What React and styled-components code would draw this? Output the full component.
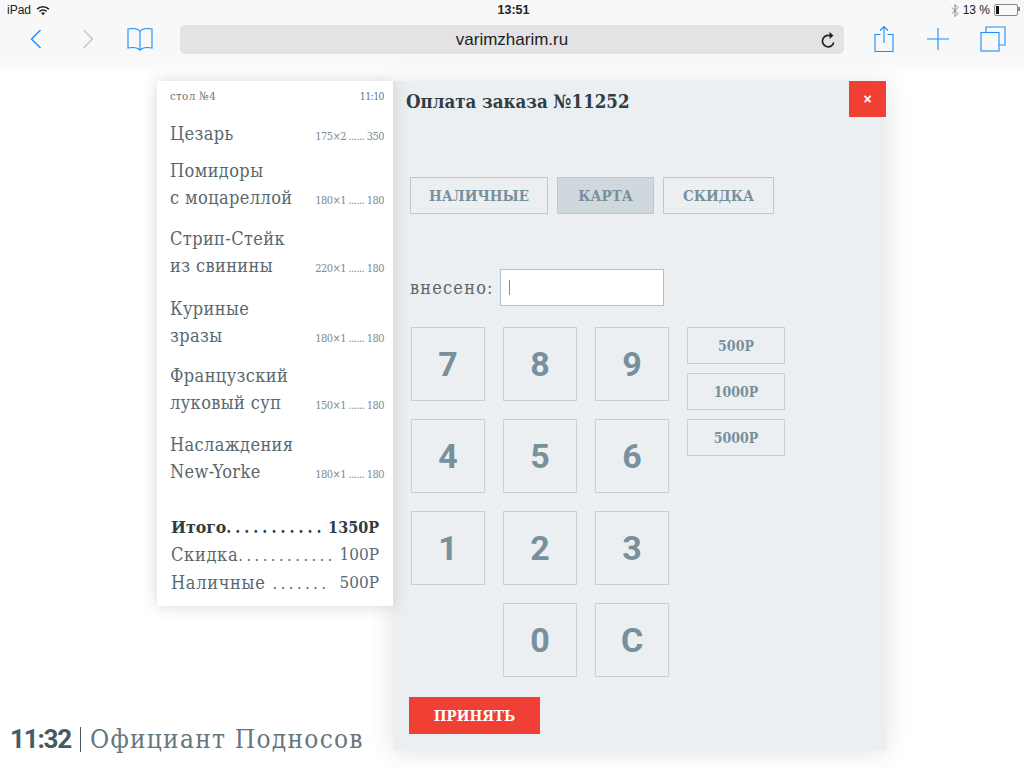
import React from 'react'
import styled, { createGlobalStyle } from 'styled-components'

const GlobalStyle = createGlobalStyle`
  html, body { margin: 0; padding: 0; background: #fff; }
  body { font-family: "DejaVu Serif Condensed", "DejaVu Serif", serif; color: #37474f; }
`

const Screen = styled.div`
  width: 1024px;
  height: 768px;
  overflow: hidden;
  display: flex;
  flex-direction: column;
`

const StatusBar = styled.div`
  height: 20px;
  background: #f8f8f8;
  display: grid;
  grid-template-columns: 1fr auto 1fr;
  align-items: center;
  padding: 0 6px 0 7px;
  font-family: "Liberation Sans", sans-serif;
  font-size: 12px;
  color: #222;
`

const StatusSide = styled.div`
  display: flex;
  align-items: center;
  gap: ${p => p.$gap || 5}px;
  justify-content: ${p => p.$end ? 'flex-end' : 'flex-start'};
`

const Clock = styled.div`
  font-weight: bold;
  font-size: 12.5px;
  margin-left: 2px;
`

const Battery = styled.div`
  width: 20px;
  height: 8px;
  border: 1px solid #888;
  border-radius: 2px;
  padding: 1px;
  box-sizing: content-box;
  position: relative;
  &:after {
    content: "";
    position: absolute;
    right: -3px;
    top: 2px;
    width: 2px;
    height: 4px;
    background: #888;
  }
`

const BatteryFill = styled.div`
  width: 3px;
  height: 8px;
  background: #111;
`

const Toolbar = styled.div`
  height: 43px;
  background: #f8f8f8;
  display: flex;
  align-items: center;
  box-sizing: border-box;
  padding-bottom: 5px;
`

const ToolIcon = styled.div`
  display: flex;
  align-items: center;
  justify-content: center;
  width: ${p => p.$w}px;
  margin-left: ${p => p.$ml || 0}px;
`

const AddressBar = styled.div`
  width: 664px;
  height: 29px;
  margin-left: 27px;
  padding-top: 1px;
  box-sizing: border-box;
  background: #e3e3e5;
  border-radius: 5px;
  display: flex;
  align-items: center;
  justify-content: center;
  position: relative;
  font-family: "Liberation Sans", sans-serif;
  font-size: 17px;
  color: #222;
`

const Reload = styled.div`
  position: absolute;
  right: 7px;
  top: 6px;
  display: flex;
`

const Page = styled.div`
  flex: 1;
  display: grid;
  grid-template-columns: 157px 236px 493px;
  grid-template-rows: 669px;
  padding-top: 18px;
  background: linear-gradient(#fafafa, #fff 10px);
`

const Receipt = styled.div`
  grid-column: 2;
  grid-row: 1;
  align-self: start;
  height: 525px;
  box-sizing: border-box;
  background: #fff;
  box-shadow: 0 0 14px rgba(60, 70, 80, 0.22);
  padding: 8px 9px 0 13px;
  position: relative;
  z-index: 2;
`

const ReceiptHead = styled.div`
  display: flex;
  justify-content: space-between;
  line-height: 14px;
  color: #68777f;
  margin-bottom: 17px;
`

const TableLabel = styled.span`
  font-size: 11.5px;
  letter-spacing: 0.3px;
`

const TimeLabel = styled.span`
  font-size: 10.5px;
  letter-spacing: -0.6px;
`

const Item = styled.div`
  display: flex;
  justify-content: space-between;
  align-items: flex-end;
  margin-top: ${p => p.$top}px;
`

const ItemName = styled.div`
  font-size: 18px;
  letter-spacing: 0.4px;
  line-height: 27px;
  color: #59676f;
`

const ItemPrice = styled.div`
  font-size: 11px;
  letter-spacing: -0.55px;
  line-height: 22px;
  margin-bottom: -1px;
  color: #7d8a92;
  white-space: nowrap;
`

const Totals = styled.div`
  margin-top: 29px;
  padding: 0 5px 0 1px;
`

const TotalRow = styled.div`
  display: flex;
  justify-content: space-between;
  font-size: ${p => p.$bold ? 16 : 17}px;
  line-height: 27px;
  white-space: nowrap;
  font-weight: ${p => p.$bold ? 'bold' : 'normal'};
  color: ${p => p.$bold ? '#2f3d45' : '#59676f'};
`

const TotalLabel = styled.span`
  font-size: ${p => p.$bold ? 17.5 : 18}px;
  letter-spacing: ${p => p.$bold ? 0 : 0.7}px;
`

const Dots = styled.span`
  font-size: 16px;
  letter-spacing: 0;
  word-spacing: -1px;
`

const Modal = styled.div`
  grid-column: 3;
  grid-row: 1;
  background: #eceff1;
  box-shadow: 0 2px 22px rgba(60, 70, 80, 0.16);
  padding: 0 17px 16px 17px;
  display: flex;
  flex-direction: column;
  height: 669px;
  box-sizing: border-box;
`

const ModalHead = styled.div`
  height: 36px;
  margin: 0 -17px 0 -4px;
  display: flex;
  justify-content: space-between;
  align-items: center;
`

const Title = styled.h1`
  margin: 5px 0 0;
  font-size: 18.5px;
  font-weight: bold;
  color: #2f3d45;
`

const Close = styled.button`
  width: 37px;
  height: 36px;
  border: 0;
  padding: 0;
  background: #f04036;
  color: #fff;
  font-family: "Liberation Sans", sans-serif;
  font-size: 14px;
  font-weight: bold;
`

const Tabs = styled.div`
  display: flex;
  gap: 9px;
  margin-top: 60px;
`

const Tab = styled.button`
  width: ${p => p.$w}px;
  height: 37px;
  border: 1px solid #bccbd2;
  background: ${p => p.$active ? '#cfd8dc' : 'transparent'};
  color: #78909c;
  padding: 0;
  font-family: inherit;
  font-size: 15px;
  font-weight: bold;
`

const PaidRow = styled.div`
  display: flex;
  align-items: center;
  gap: 7px;
  margin-top: 55px;
`

const PaidLabel = styled.div`
  width: 83px;
  font-size: 18px;
  letter-spacing: 1.2px;
  white-space: nowrap;
  color: #59676f;
`

const PaidInput = styled.div`
  width: 164px;
  height: 37px;
  box-sizing: border-box;
  border: 1px solid #b0c2ca;
  background: #fff;
  display: flex;
  align-items: center;
  padding-left: 8px;
`

const Caret = styled.div`
  width: 1px;
  height: 15px;
  background: #78909c;
`

const PadArea = styled.div`
  display: flex;
  gap: 18px;
  margin-top: 21px;
  margin-left: 1px;
`

const Keypad = styled.div`
  display: grid;
  grid-template-columns: repeat(3, 74px);
  grid-auto-rows: 74px;
  gap: 18px;
`

const Key = styled.button`
  border: 1px solid #c5d0d6;
  background: transparent;
  color: #78909c;
  padding: 0;
  font-family: Roboto, sans-serif;
  font-size: 34px;
  font-weight: bold;
  grid-column: ${p => p.$col || 'auto'};
`

const Presets = styled.div`
  display: flex;
  flex-direction: column;
  gap: 9px;
`

const Preset = styled.button`
  width: 98px;
  height: 37px;
  border: 1px solid #c5d0d6;
  background: transparent;
  color: #78909c;
  padding: 0;
  font-family: inherit;
  font-size: 14px;
  font-weight: bold;
`

const Accept = styled.button`
  width: 131px;
  height: 37px;
  margin-top: 20px;
  margin-left: -1px;
  border: 0;
  padding: 0;
  background: #f04036;
  color: #fff;
  font-family: inherit;
  font-size: 15px;
  font-weight: bold;
`

const Footer = styled.div`
  grid-column: 1 / span 2;
  grid-row: 1;
  align-self: end;
  margin-left: 10px;
  margin-bottom: -7px;
  display: flex;
  align-items: center;
  font-size: 26px;
  letter-spacing: 1.25px;
  line-height: 36px;
  color: #63767f;
  white-space: nowrap;
  position: relative;
  z-index: 3;
`

const FooterTime = styled.b`
  font-family: Roboto, sans-serif;
  font-size: 26px;
  letter-spacing: -1.2px;
  color: #455a64;
`

const FooterBar = styled.span`
  width: 1px;
  height: 25px;
  margin: 0 9px 0 9px;
  background: #455a64;
`

const items = [
  { lines: ['Цезарь'], price: '175×2 ...... 350', top: 0 },
  { lines: ['Помидоры', 'с моцареллой'], price: '180×1 ...... 180', top: 10 },
  { lines: ['Стрип-Стейк', 'из свинины'], price: '220×1 ...... 180', top: 14 },
  { lines: ['Куриные', 'зразы'], price: '180×1 ...... 180', top: 16 },
  { lines: ['Французский', 'луковый суп'], price: '150×1 ...... 180', top: 13 },
  { lines: ['Наслаждения', 'New-Yorke'], price: '180×1 ...... 180', top: 15 },
]

const keys = ['7', '8', '9', '4', '5', '6', '1', '2', '3']

function Blue({ w, h, children }) {
  return (
    <svg width={w} height={h} viewBox={`0 0 ${w} ${h}`} fill="none" stroke="#1a8cff" strokeWidth="1.1">
      {children}
    </svg>
  )
}

export default function App() {
  return (
    <Screen>
      <GlobalStyle />
      <StatusBar>
        <StatusSide>
          iPad
          <svg width="14" height="11" viewBox="0 0 14 11" fill="#222">
            <path d="M0.5 3.6a9.2 9.2 0 0 1 13 0l-1.2 1.2a7.5 7.5 0 0 0-10.6 0z" />
            <path d="M2.8 5.9a6 6 0 0 1 8.4 0L10 7.1a4.2 4.2 0 0 0-6 0z" />
            <path d="M5 8.1a2.9 2.9 0 0 1 4 0l-2 2.1z" />
          </svg>
        </StatusSide>
        <Clock>13:51</Clock>
        <StatusSide $end $gap={4}>
          <svg width="8" height="13" viewBox="0 0 8 13" fill="none" stroke="#888" strokeWidth="1">
            <path d="M1 3.5l6 6-3 3V.5l3 3-6 6" />
          </svg>
          13 %
          <Battery><BatteryFill /></Battery>
        </StatusSide>
      </StatusBar>
      <Toolbar>
        <ToolIcon $w={20} $ml={26}>
          <Blue w={12} h={20}><path d="M10.5 1L1.5 10l9 9" strokeWidth="1.4" /></Blue>
        </ToolIcon>
        <ToolIcon $w={20} $ml={32}>
          <svg width="12" height="20" viewBox="0 0 12 20" fill="none" stroke="#c4c4c4" strokeWidth="1.4">
            <path d="M1.5 1l9 9-9 9" />
          </svg>
        </ToolIcon>
        <ToolIcon $w={26} $ml={29}>
          <Blue w={26} h={24}>
            <path d="M13 4.5C11 1.5 6 1 1 2v19c5-1 9.5-.5 12 2 2.5-2.5 7-3 12-2V2C20 1 15 1.5 13 4.5V23" />
          </Blue>
        </ToolIcon>
        <AddressBar>
          varimzharim.ru
          <Reload>
            <svg width="16" height="17" viewBox="0 0 16 17" fill="none" stroke="#222" strokeWidth="1.7">
              <path d="M12.7 11.5A5.7 5.7 0 1 1 8 4.5h2" />
              <path d="M8.500 1l4 3.500-4 3.500z" fill="#222" stroke="none" />
            </svg>
          </Reload>
        </AddressBar>
        <ToolIcon $w={22} $ml={29}>
          <Blue w={20} h={28}>
            <path d="M6.5 9.5H1v17h18v-17h-5.5M10 18V1.5M6 5.5l4-4 4 4" />
          </Blue>
        </ToolIcon>
        <ToolIcon $w={24} $ml={31}>
          <Blue w={22} h={22}><path d="M11 0v22M0 11h22" /></Blue>
        </ToolIcon>
        <ToolIcon $w={26} $ml={30}>
          <Blue w={26} h={26}>
            <path d="M6 6V1h19v18h-6" />
            <rect x="1" y="6.5" width="18" height="18.5" />
          </Blue>
        </ToolIcon>
      </Toolbar>
      <Page>
        <Footer>
          <FooterTime>11:32</FooterTime>
          <FooterBar />
          Официант Подносов
        </Footer>
        <Receipt>
          <ReceiptHead>
            <TableLabel>стол №4</TableLabel>
            <TimeLabel>11:10</TimeLabel>
          </ReceiptHead>
          {items.map(item => (
            <Item key={item.lines[0]} $top={item.top}>
              <ItemName>
                {item.lines.map(line => <div key={line}>{line}</div>)}
              </ItemName>
              <ItemPrice>{item.price}</ItemPrice>
            </Item>
          ))}
          <Totals>
            <TotalRow $bold>
              <span><TotalLabel $bold>Итого</TotalLabel><Dots>. . . . . . . . . . .</Dots></span>
              <span>1350Р</span>
            </TotalRow>
            <TotalRow>
              <span><TotalLabel>Скидка</TotalLabel><Dots>. . . . . . . . . . . .</Dots></span>
              <span>100Р</span>
            </TotalRow>
            <TotalRow>
              <span><TotalLabel>Наличные</TotalLabel><Dots>{'\u00a0\u00a0'}. . . . . . .</Dots></span>
              <span>500Р</span>
            </TotalRow>
          </Totals>
        </Receipt>
        <Modal>
          <ModalHead>
            <Title>Оплата заказа №11252</Title>
            <Close>×</Close>
          </ModalHead>
          <Tabs>
            <Tab $w={138}>НАЛИЧНЫЕ</Tab>
            <Tab $w={97} $active>КАРТА</Tab>
            <Tab $w={111}>СКИДКА</Tab>
          </Tabs>
          <PaidRow>
            <PaidLabel>внесено:</PaidLabel>
            <PaidInput><Caret /></PaidInput>
          </PaidRow>
          <PadArea>
            <Keypad>
              {keys.map(k => <Key key={k}>{k}</Key>)}
              <Key $col={2}>0</Key>
              <Key>C</Key>
            </Keypad>
            <Presets>
              <Preset>500Р</Preset>
              <Preset>1000Р</Preset>
              <Preset>5000Р</Preset>
            </Presets>
          </PadArea>
          <Accept>ПРИНЯТЬ</Accept>
        </Modal>
      </Page>
    </Screen>
  )
}
